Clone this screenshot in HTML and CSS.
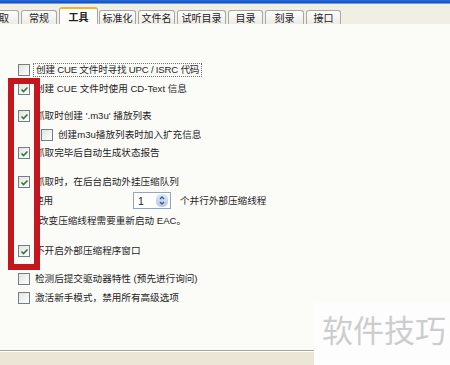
FILE: index.html
```html
<!DOCTYPE html>
<html lang="zh-CN">
<head>
    <meta charset="UTF-8">
    <title>EAC 选项 - 工具</title>
    <link rel="stylesheet" href="styles.css">
</head>
<body>
    <div class="window">
        <div class="title-bar"></div>

        <!-- Tabs -->
        <div class="tab-bar">
            <div class="tab tab-cut">取</div>
            <div class="tab">常规</div>
            <div class="tab active">工具</div>
            <div class="tab">标准化</div>
            <div class="tab">文件名</div>
            <div class="tab">试听目录</div>
            <div class="tab">目录</div>
            <div class="tab">刻录</div>
            <div class="tab">接口</div>
        </div>

        <!-- Tools page -->
        <div class="panel">
            <div class="row">
                <span class="box"></span>
                <span class="label focus">创建 CUE 文件时寻找 UPC / ISRC 代码</span>
            </div>
            <div class="row mt5">
                <span class="box checked"><svg viewBox="0 0 9 9"><polyline points="1.5,4.5 3.5,6.5 7.5,2.5"/></svg></span>
                <span class="label">创建 CUE 文件时使用 CD-Text 信息</span>
            </div>
            <div class="row mt13">
                <span class="box checked"><svg viewBox="0 0 9 9"><polyline points="1.5,4.5 3.5,6.5 7.5,2.5"/></svg></span>
                <span class="label">抓取时创建 '.m3u' 播放列表</span>
            </div>
            <div class="row sub mt5">
                <span class="box"></span>
                <span class="label">创建m3u播放列表时加入扩充信息</span>
            </div>
            <div class="row mt4">
                <span class="box checked"><svg viewBox="0 0 9 9"><polyline points="1.5,4.5 3.5,6.5 7.5,2.5"/></svg></span>
                <span class="label">抓取完毕后自动生成状态报告</span>
            </div>
            <div class="row mt15">
                <span class="box checked"><svg viewBox="0 0 9 9"><polyline points="1.5,4.5 3.5,6.5 7.5,2.5"/></svg></span>
                <span class="label">抓取时，在后台启动外挂压缩队列</span>
            </div>
            <div class="row text-row spin-row mt3">
                <span class="label use">使用</span>
                <span class="spin">
                    <span class="spin-value">1</span>
                    <span class="spin-btn">
                        <svg viewBox="0 0 12 13"><polyline points="4,5 6,3 8,5"/><polyline points="4,8 6,10 8,8"/></svg>
                    </span>
                </span>
                <span class="label">个并行外部压缩线程</span>
            </div>
            <div class="row text-row mt5">
                <span class="label">改变压缩线程需要重新启动 EAC。</span>
            </div>
            <div class="row mt16">
                <span class="box checked"><svg viewBox="0 0 9 9"><polyline points="1.5,4.5 3.5,6.5 7.5,2.5"/></svg></span>
                <span class="label">不开启外部压缩程序窗口</span>
            </div>
            <div class="row mt14">
                <span class="box"></span>
                <span class="label">检测后提交驱动器特性 (预先进行询问)</span>
            </div>
            <div class="row mt5">
                <span class="box"></span>
                <span class="label">激活新手模式，禁用所有高级选项</span>
            </div>
        </div>

        <div class="footer"></div>

        <!-- Annotation and watermark -->
        <div class="highlight"></div>
        <div class="watermark">软件技巧</div>
    </div>
</body>
</html>
```

FILE: styles.css
```css
/* General Styles */
body {
    margin: 0;
    padding: 0;
    background-color: #ece9d8;
    font-family: "Liberation Sans", "Noto Sans CJK SC", sans-serif;
    font-size: 9.6px;
    color: #1e1e1e;
}

.window {
    position: relative;
    width: 450px;
    height: 365px;
    overflow: hidden;
    display: flex;
    flex-direction: column;
}

.title-bar {
    height: 3px;
    background: linear-gradient(#2a6ad8, #0f4fc4);
    border-bottom: 1px solid #6f9ee0;
}

/* Tabs */
.tab-bar {
    height: 20px;
    display: flex;
    align-items: flex-end;
    background-color: #f1efe4;
}

.tab {
    height: 14px;
    padding: 0;
    margin-right: 2px;
    flex: none;
    display: flex;
    align-items: center;
    justify-content: center;
    white-space: nowrap;
    border: 1px solid #a4a9a8;
    border-bottom: none;
    border-radius: 3px 3px 0 0;
    background: linear-gradient(#fefefe, #ecebe4);
    font-size: 10px;
    color: #222;
    box-sizing: border-box;
}

.tab:nth-child(2) { width: 36px; }
.tab:nth-child(4) { width: 37px; }
.tab:nth-child(5) { width: 37px; }
.tab:nth-child(6) { width: 49px; }
.tab:nth-child(7) { width: 35px; }
.tab:nth-child(8) { width: 39px; }
.tab:nth-child(9) { width: 35px; }

.tab-cut {
    width: 30px;
    margin-left: -11px;
    justify-content: flex-end;
    padding-right: 9px;
}

.tab.active {
    width: 39px;
    height: 17px;
    background: #fcfcfb;
    border-top: 2px solid #f2b13a;
    font-weight: bold;
    margin-right: 1px;
}

/* Panel */
.panel {
    height: 327px;
    padding-top: 39px;
    box-sizing: border-box;
    background-color: #fbfbf8;
    border-bottom: 1px solid #a8a59c;
    display: flex;
    flex-direction: column;
}

.footer {
    flex: 1;
    border-top: 1px solid #ffffff;
    background-color: #ebe6d5;
}

.row {
    height: 14px;
    padding-left: 18px;
    display: flex;
    align-items: center;
}

.row.sub {
    padding-left: 41px;
}

.row.text-row {
    padding-left: 34px;
}

.spin-row {
    height: 17px;
}

.mt3 { margin-top: 3px; }
.mt4 { margin-top: 4px; }
.mt5 { margin-top: 5px; }
.mt13 { margin-top: 13px; }
.mt14 { margin-top: 14px; }
.mt15 { margin-top: 15px; }
.mt16 { margin-top: 16px; }

.box {
    width: 10px;
    height: 10px;
    flex: none;
    border: 1px solid #6f7f8d;
    background: linear-gradient(135deg, #e4e3dc, #ffffff);
    display: flex;
    align-items: center;
    justify-content: center;
}

.box svg {
    width: 9px;
    height: 9px;
    fill: none;
    stroke: #2e7a33;
    stroke-width: 1.6;
}

.label {
    margin-left: 5px;
    line-height: 14px;
    white-space: nowrap;
}

.label.focus {
    margin-left: 3px;
    padding: 0 2px;
    border: 1px dotted #707070;
    line-height: 12px;
    letter-spacing: -0.2px;
}

.label.use {
    margin-left: 0;
    width: 99px;
}

/* Spin box */
.spin {
    width: 38px;
    height: 17px;
    box-sizing: border-box;
    border: 1px solid #8ea7c2;
    background: #ffffff;
    display: flex;
    align-items: center;
    justify-content: space-between;
}

.spin-value {
    padding-left: 4px;
    font-size: 10.5px;
}

.spin-btn {
    width: 12px;
    height: 13px;
    margin-right: 2px;
    border-radius: 5px;
    background: linear-gradient(#dbe6f6, #b4c8ea);
    display: flex;
}

.spin-btn svg {
    width: 12px;
    height: 13px;
    fill: none;
    stroke: #3b5b93;
    stroke-width: 1.3;
}

.spin + .label {
    margin-left: 9px;
}

/* Red annotation box */
.highlight {
    position: absolute;
    left: 8px;
    top: 78px;
    width: 20px;
    height: 180px;
    border: 6px solid #c3161d;
}

/* Watermark */
.watermark {
    position: absolute;
    left: 314px;
    top: 303px;
    width: 136px;
    height: 62px;
    background: #fdfdfd;
    color: #cdcdcd;
    font-family: "Noto Sans CJK SC", sans-serif;
    font-size: 31px;
    line-height: 52px;
    padding-left: 8px;
    box-sizing: border-box;
}
```
